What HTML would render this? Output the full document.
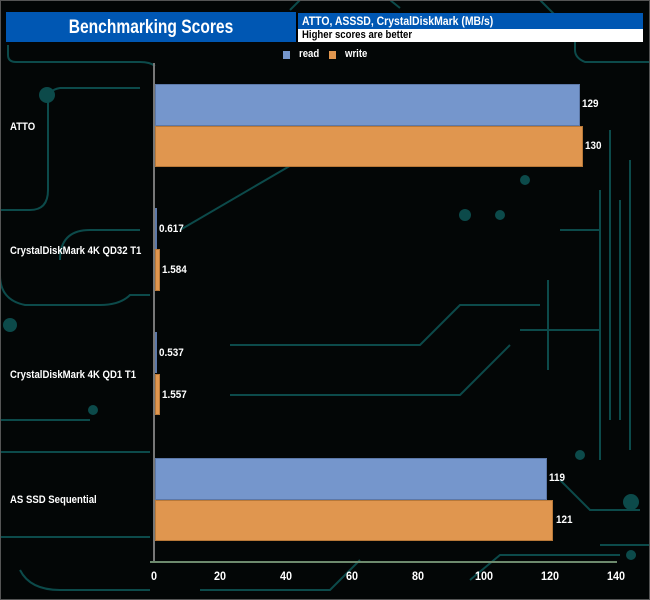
<!DOCTYPE html>
<html><head><style>
body{margin:0;background:#000;}
.w{position:relative;width:650px;height:600px;overflow:hidden;background:#030606;font-family:"Liberation Sans",sans-serif;font-weight:bold;color:#fff;}
.a{position:absolute;}
.lbl{font-size:11px;transform:scaleX(0.87);transform-origin:left;}
.bar{position:absolute;left:155px;}
.r{background:#7596cc;border:1px solid #5c78a8;box-sizing:border-box;}
.o{background:#e0964f;border:1px solid #b87838;box-sizing:border-box;}
.v{position:absolute;font-size:11px;transform:scaleX(0.9);transform-origin:left;}
.t{position:absolute;top:569px;font-size:12px;width:30px;text-align:center;transform:scaleX(0.9);}
</style></head><body><div class="w">
<svg class="a" style="left:0;top:0" width="650" height="600" fill="none" stroke="#0c4a4a" stroke-width="2">
<path d="M8 45 V55 Q8 62 16 62 H140 Q150 62 155 66"/>
<path d="M300 0 L290 10 M390 0 L400 8 M540 0 L575 35 V50 Q575 58 585 62 H650"/>
<path d="M0 210 H30 Q48 210 48 190 V100 Q48 90 60 88 H140"/>
<path d="M0 275 Q0 300 25 305 H100 Q120 305 130 295 H150"/>
<path d="M0 420 H90 M0 537 H150 M0 452 H150"/>
<path d="M620 200 V420 M600 190 V460 M610 130 V420 M630 160 V450"/>
<path d="M560 230 H600 M520 330 H600 M548 280 V370"/>
<path d="M600 545 H650 M560 480 L590 510 H640"/>
<path d="M60 260 Q60 230 90 230 H140 M180 230 L300 160 H420 L470 120 H540"/>
<path d="M230 345 H420 L460 305 H540 M230 395 H460 L510 345"/>
<path d="M470 580 L500 555 H620"/>
<path d="M20 570 Q30 590 60 590 H150 M200 590 H330 L360 560"/>
</svg>
<svg class="a" style="left:0;top:0" width="650" height="600" fill="#0c4a4a">
<circle cx="93" cy="410" r="5"/><circle cx="631" cy="502" r="8"/><circle cx="631" cy="555" r="5"/>
<circle cx="47" cy="95" r="8"/><circle cx="10" cy="325" r="7"/><circle cx="465" cy="215" r="6"/><circle cx="500" cy="215" r="5"/><circle cx="525" cy="180" r="5"/><circle cx="580" cy="455" r="5"/>
</svg>
<div class="a" style="left:0;top:0;width:648px;height:598px;border:1px solid #555;"></div>
<div class="a" style="left:6px;top:12px;width:290px;height:30px;background:#0057b3;"></div>
<div class="a" style="left:6px;top:12px;width:290px;height:30px;font-size:19px;line-height:32px;text-align:center;transform:scaleX(0.82);">Benchmarking Scores</div>
<div class="a" style="left:296px;top:13px;width:347px;height:16px;background:#0057b3;border-left:2px solid #000;box-sizing:border-box;"></div>
<div class="a" style="left:302px;top:13px;font-size:12px;line-height:16px;transform:scaleX(0.87);transform-origin:left;">ATTO, ASSSD, CrystalDiskMark (MB/s)</div>
<div class="a" style="left:296px;top:29px;width:347px;height:13px;background:#fff;border-left:2px solid #000;box-sizing:border-box;"></div>
<div class="a" style="left:302px;top:29px;color:#000;font-size:11px;line-height:13px;transform:scaleX(0.87);transform-origin:left;">Higher scores are better</div>
<div class="a" style="left:283px;top:51px;width:7px;height:8px;background:#7596cc;"></div>
<div class="a lbl" style="left:299px;top:48px;">read</div>
<div class="a" style="left:329px;top:51px;width:7px;height:8px;background:#e0964f;"></div>
<div class="a lbl" style="left:345px;top:48px;">write</div>
<div class="a" style="left:153px;top:63px;width:2px;height:500px;background:#777;"></div>
<div class="a" style="left:150px;top:561px;width:467px;height:2px;background:#6d8a6d;"></div>
<div class="bar r" style="top:84px;height:42px;width:425px;"></div><div class="v" style="left:582px;top:98px;">129</div>
<div class="bar o" style="top:126px;height:41px;width:428px;"></div><div class="v" style="left:585px;top:140px;">130</div>
<div class="bar r" style="top:208px;height:41px;width:2px;"></div><div class="v" style="left:159px;top:223px;">0.617</div>
<div class="bar o" style="top:249px;height:42px;width:5px;"></div><div class="v" style="left:162px;top:264px;">1.584</div>
<div class="bar r" style="top:332px;height:41px;width:2px;"></div><div class="v" style="left:159px;top:347px;">0.537</div>
<div class="bar o" style="top:374px;height:41px;width:5px;"></div><div class="v" style="left:162px;top:389px;">1.557</div>
<div class="bar r" style="top:458px;height:42px;width:392px;"></div><div class="v" style="left:549px;top:472px;">119</div>
<div class="bar o" style="top:500px;height:41px;width:398px;"></div><div class="v" style="left:556px;top:514px;">121</div>
<div class="a lbl" style="left:10px;top:121px;">ATTO</div>
<div class="a lbl" style="left:10px;top:245px;">CrystalDiskMark 4K QD32 T1</div>
<div class="a lbl" style="left:10px;top:369px;">CrystalDiskMark 4K QD1 T1</div>
<div class="a lbl" style="left:10px;top:494px;">AS SSD Sequential</div>
<div class="t" style="left:139px;">0</div><div class="t" style="left:205px;">20</div><div class="t" style="left:271px;">40</div><div class="t" style="left:337px;">60</div><div class="t" style="left:403px;">80</div><div class="t" style="left:469px;">100</div><div class="t" style="left:535px;">120</div><div class="t" style="left:601px;">140</div>
</div></body></html>
